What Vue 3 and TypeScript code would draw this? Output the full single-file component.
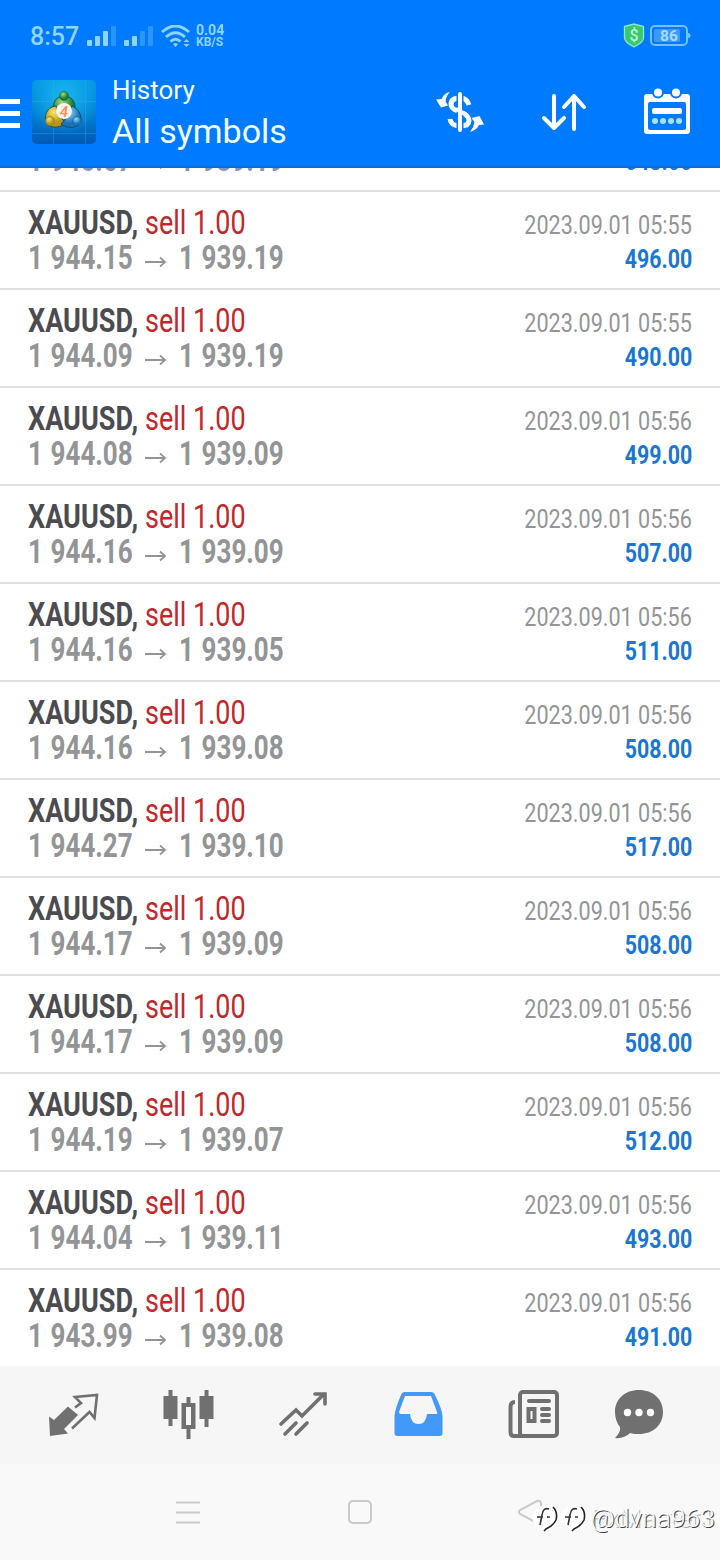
<script setup lang="ts">
interface Deal { open: string; close: string; time: string; profit: string }

const deals: Deal[] = [
  ['1 945.67', '1 939.19', '05:55', '648.00'],
  ['1 944.15', '1 939.19', '05:55', '496.00'],
  ['1 944.09', '1 939.19', '05:55', '490.00'],
  ['1 944.08', '1 939.09', '05:56', '499.00'],
  ['1 944.16', '1 939.09', '05:56', '507.00'],
  ['1 944.16', '1 939.05', '05:56', '511.00'],
  ['1 944.16', '1 939.08', '05:56', '508.00'],
  ['1 944.27', '1 939.10', '05:56', '517.00'],
  ['1 944.17', '1 939.09', '05:56', '508.00'],
  ['1 944.17', '1 939.09', '05:56', '508.00'],
  ['1 944.19', '1 939.07', '05:56', '512.00'],
  ['1 944.04', '1 939.11', '05:56', '493.00'],
  ['1 943.99', '1 939.08', '05:56', '491.00'],
].map(([open, close, time, profit]) => ({ open, close, time, profit }))
</script>

<template>
  <div class="screen">
    <header class="header">
      <div class="status">
        <span class="clock">8:57</span>
        <svg class="signals" width="104" height="24" viewBox="0 0 104 24" fill="#8fd3ff">
          <rect x="0" y="15" width="5" height="6" rx="1" /><rect x="8" y="11" width="5" height="10" rx="1" /><rect x="16" y="6" width="5" height="15" rx="1" /><rect x="24" y="1" width="5" height="20" rx="1" opacity=".3" />
          <rect x="37" y="15" width="5" height="6" rx="1" /><rect x="45" y="11" width="5" height="10" rx="1" /><rect x="53" y="6" width="5" height="15" rx="1" opacity=".3" /><rect x="61" y="1" width="5" height="20" rx="1" opacity=".3" />
          <g fill="none" stroke="#8fd3ff" stroke-width="3"><path d="M75 7Q88.500 -5 102 7M79 12Q88.500 3.500 98 12M83.500 16.500Q88.500 12 93.500 16.500" /></g>
          <path d="M86 19Q88.500 17 91 19L88.500 22ZM96.500 17L99.500 14L102.500 17ZM96.500 19L99.500 22L102.500 19Z" />
        </svg>
        <span class="speed"><span>0.04</span><span>KB/S</span></span>
        <svg class="battery" width="68" height="26" viewBox="0 0 68 26">
          <path d="M1.500 3.500L11 1L20.500 3.500V15Q20.500 19 11 24Q1.500 19 1.500 15Z" fill="#37c871" stroke="#8fe6d0" stroke-width="1.300" />
          <text x="11" y="18" text-anchor="middle" font-size="16" font-weight="500" fill="#b9f5d0">$</text>
          <rect x="28" y="3" width="36" height="19" rx="4" fill="none" stroke="#79bfff" stroke-width="2" />
          <rect x="31" y="6" width="26" height="13" rx="1.500" fill="#3d98ff" /><path d="M65 10Q67.500 10 67.500 12.500T65 15Z" fill="#79bfff" />
          <text x="46" y="18" text-anchor="middle" font-size="15.500" font-weight="700" fill="#a9dcff">86</text>
        </svg>
      </div>
      <div class="toolbar">
        <svg class="menu" width="20" height="32" viewBox="0 0 20 32" fill="#fff"><path d="M0 1H20V6H0ZM0 13H20V18H0ZM0 25H20V30H0Z" /></svg>
        <svg class="logo" width="64" height="64" viewBox="0 0 64 64">
          <defs>
            <linearGradient id="tile" x1="0" y1="0" x2="0" y2="1"><stop offset="0" stop-color="#0798e5" /><stop offset=".55" stop-color="#027fd0" /><stop offset="1" stop-color="#0059b4" /></linearGradient>
            <radialGradient id="glow" cx=".5" cy=".3" r=".55"><stop offset="0" stop-color="#1dc4f4" stop-opacity=".8" /><stop offset="1" stop-color="#1dc4f4" stop-opacity="0" /></radialGradient>
            <radialGradient id="green" cx=".4" cy=".3"><stop offset="0" stop-color="#a5db80" /><stop offset="1" stop-color="#197d35" /></radialGradient>
            <radialGradient id="gold" cx=".4" cy=".3"><stop offset="0" stop-color="#f4e66b" /><stop offset="1" stop-color="#b99518" /></radialGradient>
            <radialGradient id="blue" cx=".4" cy=".3"><stop offset="0" stop-color="#91d8f8" /><stop offset="1" stop-color="#1874bb" /></radialGradient>
          </defs>
          <rect width="64" height="64" rx="5" fill="url(#tile)" /><rect width="64" height="64" rx="5" fill="url(#glow)" />
          <path d="M21.500 0V64M53.500 0V64M0 21.500H64M0 53.500H64" stroke="#49adf0" stroke-width=".8" opacity=".4" />
          <g stroke="#174e65" stroke-width="1">
            <path d="M21 29C21 20 26 16 32 16S44 20 43 30L38 35H26Z" fill="url(#green)" />
            <path d="M24 26C13 27 11 40 16 45C22 49 29 47 34 43L26 35Z" fill="url(#gold)" />
            <path d="M40 26C48 29 51 39 48 44C43 49 33 48 29 44L37 35Z" fill="url(#blue)" />
          </g>
          <circle cx="32" cy="16" r="4.500" fill="url(#green)" stroke="#11602c" stroke-width=".6" /><circle cx="18" cy="41" r="4.500" fill="url(#gold)" stroke="#967010" stroke-width=".6" /><circle cx="45" cy="41" r="4.500" fill="url(#blue)" stroke="#1d5d9b" stroke-width=".6" />
          <circle cx="32" cy="31" r="8" fill="#fff3e9" /><text x="32" y="36.500" text-anchor="middle" font-size="15" font-weight="500" font-style="italic" fill="#ee8d62">4</text>
        </svg>
        <div class="titles"><span class="title">History</span><span class="subtitle">All symbols</span></div>
        <svg class="tool" width="50" height="50" viewBox="0 0 50 50" fill="none" stroke="#fff">
          <path d="M33 18Q31 11 24 11Q15 11 15 17.500Q15 22 24 25Q33 28 33 33.500Q33 39 24 39Q15 39 14 32" stroke-width="5" />
          <path d="M24 7V43" stroke="#007aff" stroke-width="7" />
          <path d="M24 7V43M21 22.500L29 27" stroke-width="4" stroke-linecap="round" />
          <path d="M14 5Q8 6 5.500 12L0 12.500L5 20.500L12 18.500L9.500 14.500Q10 9 14 5ZM34 45Q41 43 43 38L48 37.500L43.500 29L35.500 31L38.500 35Q38 40 34 45Z" fill="#fff" stroke="none" />
        </svg>
        <svg class="tool sort" width="46" height="40" viewBox="0 0 46 40" fill="none" stroke="#fff" stroke-width="4" stroke-linecap="round" stroke-linejoin="round"><path d="M13 4V36M3 26L13 36L23 26M33 37V4M23 15L33 4L43 15" /></svg>
        <svg class="tool calendar" width="48" height="48" viewBox="0 0 48 48">
          <rect x="1" y="6" width="46" height="40" rx="3" fill="#fff" /><rect x="5" y="14" width="38" height="28" rx="2" fill="#007aff" />
          <circle cx="15" cy="4.500" r="5" fill="#fff" stroke="#007aff" stroke-width="2" /><circle cx="33" cy="4.500" r="5" fill="#fff" stroke="#007aff" stroke-width="2" />
          <rect x="9" y="20" width="30" height="6" rx="2" fill="#fff" /><g fill="#a5e2ff"><circle cx="12" cy="33" r="3" /><circle cx="20" cy="33" r="3" /><circle cx="28" cy="33" r="3" /><circle cx="36" cy="33" r="3" /></g>
        </svg>
      </div>
    </header>

    <main class="history">
      <article v-for="(deal, i) in deals" :key="i" class="deal" :class="{ scrolled: i === 0 }">
        <div class="left">
          <div v-if="i > 0" class="line"><span class="symbol">XAUUSD,</span><span class="side">sell 1.00</span></div>
          <div class="line"><span class="price">{{ deal.open }}</span><svg class="arrow" width="22" height="12" viewBox="0 0 22 12" fill="none" stroke="#929496" stroke-width="1.800"><path d="M0 6H20M15 1.500L20 6L15 10.500" /></svg><span class="price">{{ deal.close }}</span></div>
        </div>
        <div class="right"><span v-if="i > 0" class="time">2023.09.01 {{ deal.time }}</span><span class="profit">{{ deal.profit }}</span></div>
      </article>
    </main>

    <nav class="tabs">
      <svg width="720" height="98" viewBox="0 0 720 98" fill="#707070">
        <path d="M49 50.500L54 54L68 40.500L78 49L64 63L68 67.500L50 70Z" /><path d="M75 41.500L81 37L75 31L97 29L94.500 52L89.500 46L72 62.500" fill="none" stroke="#707070" stroke-width="2.600" />
        <path d="M168.500 24h4v6h5v23h-5v7h-4v-7h-5V30h5ZM204.500 24h4v6h5v23h-5v8h-4v-8h-5V30h5ZM186.500 31h4v6h5v26h-5v10h-4V63h-5V37h5ZM186 41v18h5V41Z" fill-rule="evenodd" />
        <path d="M281 58L296 44L302 50L324 28M315 28H325V38M285 68L296 57M296 68L307 57" fill="none" stroke="#707070" stroke-width="3.600" stroke-linecap="round" />
        <path d="M405 26H431Q434 26 435 29Q442 43 442.500 50V67Q442.500 70 439.500 70H397.500Q394.500 70 394.500 67V50Q395 43 401 29Q402 26 405 26ZM405 30L399 46Q399 48 401 48H410Q411 58 418.500 58T427 48H436Q438 48 437 46L431 30Z" fill="#4299fa" fill-rule="evenodd" />
        <g transform="translate(0 4)">
          <g fill="none" stroke="#707070" stroke-width="4"><rect x="520" y="22" width="37" height="44" rx="3" /><path d="M515 32Q510.500 32 510.500 37V62Q510.500 66 514 66H523" /><rect x="528.500" y="39" width="6" height="12" /><path d="M529 31H549M542 39H549M542 45H549M542 51H549" stroke-linecap="round" /></g>
          <path d="M639 20C653 20 663 29 663 42S653 64 639 64C636 64 633 64 630 63Q624 69 615 68Q621 62 620 57Q615 51 615 42C615 29 625 20 639 20Z" /><g fill="#fff"><circle cx="627.500" cy="42.500" r="3.700" /><circle cx="639" cy="42.500" r="3.700" /><circle cx="650.500" cy="42.500" r="3.700" /></g>
        </g>
      </svg>
    </nav>
    <footer class="system">
      <svg width="720" height="96" viewBox="0 0 720 96" fill="none" stroke="#cacaca" stroke-width="2">
        <path d="M176 38.500H200M176 48.500H200M176 58.500H200" /><rect x="349" y="37" width="22" height="22" rx="4" /><path d="M541 42V39Q540 36 537 37L520 46Q518 48 520 50L537 59" />
        <g v-for="x in [545, 573]" :key="x" :transform="`translate(${x} 54)`">
          <circle r="12.500" fill="#fff" stroke="none" /><path d="M8 -11Q13 -6 11 2Q8 8 1 11L-1 13" stroke="#222" stroke-width="1.600" />
          <path d="M4 -9Q-2 -11 -3 -3L-5 7M-8 -1H-2M2 -1H5" stroke="#333" stroke-width="1.600" />
        </g>
      </svg>
      <div class="mark ghost">FxMaster1</div>
      <div class="mark">@dvna963</div>
    </footer>
  </div>
</template>

<style>
body { margin: 0; }
</style>

<style scoped>
.screen { width: 720px; height: 1560px; overflow: hidden; display: flex; flex-direction: column; background: #fff; font-family: Roboto, "Liberation Sans", sans-serif; }
.header { height: 168px; box-sizing: border-box; border-bottom: 2px solid #146cc8; background: #007aff; color: #f2ffff; flex: none; }
.status { display: flex; align-items: flex-start; height: 72px; box-sizing: border-box; padding: 23px 29px 0 30px; }
.clock { width: 57px; font-size: 25px; line-height: 28px; font-weight: 500; color: #8fd3ff; }
.signals { margin-top: 2px; }
.speed { display: flex; flex-direction: column; margin-left: 5px; font-size: 13px; line-height: 11.500px; font-weight: 700; color: #8fd3ff; padding-top: 2px; }
.speed span:first-child { font-size: 14px; }
.speed span:last-child { font-size: 12px; }
.battery { margin-left: auto; }
.toolbar { display: flex; align-items: flex-start; padding-top: 8px; }
.menu { margin-top: 18px; }
.logo { margin-left: 12px; }
.titles { display: flex; flex-direction: column; width: 324px; margin-left: 16px; }
.title { font-size: 26px; line-height: 30px; margin-top: -5px; }
.subtitle { font-size: 34px; line-height: 40px; margin-top: 6px; }
.tool { margin-top: 7px; flex: none; }
.sort { margin: 12px 0 0 55px; }
.calendar { margin: 8px 0 0 56px; }
.history { height: 1198px; overflow: hidden; flex: none; }
.deal { height: 98px; box-sizing: border-box; border-bottom: 2px solid #e0e0e0; display: flex; justify-content: space-between; padding: 14px 28px 0; }
.scrolled { height: 24px; align-items: flex-end; padding: 0 28px 14px; }
.scrolled .right { margin-bottom: -2px; }
.scrolled .price { color: #7d95c0; }
.line { display: flex; font-size: 32.500px; line-height: 34px; height: 34px; white-space: nowrap; }
.symbol, .side, .price { transform-origin: 0 50%; }
.symbol { width: 117px; color: #4b4b50; font-weight: 700; transform: scaleX(.832); }
.side { color: #bd292c; transform: scaleX(.83); }
.price { width: 104px; color: #929496; font-weight: 700; transform: translateY(.5px) scaleX(.8); word-spacing: 1.500px; }
.arrow { margin: 16px 12px 0 13px; flex: none; }
.right { display: flex; flex-direction: column; align-items: flex-end; font-size: 26px; line-height: 34px; white-space: nowrap; }
.time, .profit { transform-origin: 100% 50%; }
.time { color: #929496; transform: scaleX(.83); margin-top: 2px; }
.profit { color: #1976d2; font-weight: 700; transform: scaleX(.82); }
.tabs { height: 98px; flex: none; background: #f6f6f6; }
.system { height: 96px; flex: none; background: #f9f9f9; position: relative; }
.tabs svg, .system svg { display: block; }
.mark { position: absolute; right: 5px; top: 38px; font-size: 26.500px; line-height: 32px; font-weight: 300; color: #fbfbfb; text-shadow: 1px 1px 0 #444; }
.ghost { text-shadow: 1px 1px 0 #aaa; }
</style>
